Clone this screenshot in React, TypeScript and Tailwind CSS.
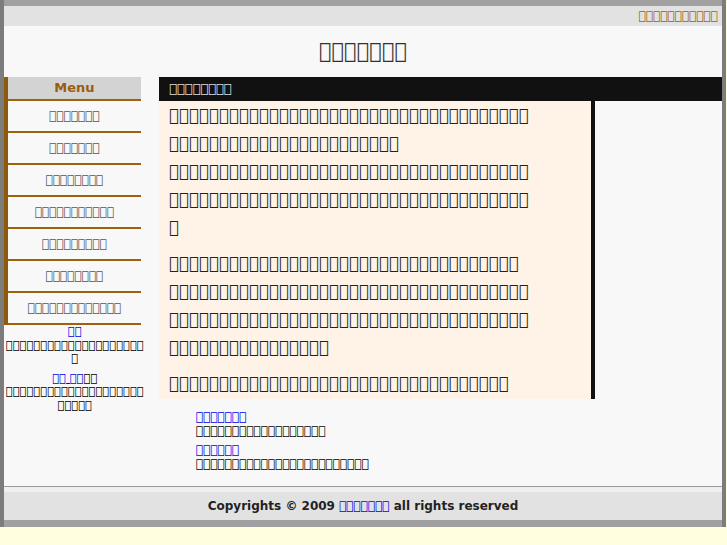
// Text in the reference shows as missing-glyph boxes; private-use
// characters give the same boxes here.
const box = (n: number) => "\uE000".repeat(n);

const menu = [7, 7, 8, 11, 9, 8, 13];

export default function App() {
  return (
    <div className="min-h-[545px] bg-[#ffffe0] font-['DejaVu_Sans',sans-serif]">
      <div className="w-[726px] border-l-[4px] border-r-[4px] border-[#7c7c7c] bg-[#f8f8f8]">
        <div className="h-[6px] bg-[#a0a0a0]" />
        <div className="flex h-[20px] items-center justify-end bg-[#e2e2e2] pr-[4px]">
          <a href="#" className="text-[12px] text-[#a0600c]">
            {box(11)}
          </a>
        </div>
        <div className="flex h-[51px] items-center justify-center text-[21px] text-[#333]">
          {box(7)}
        </div>

        <div className="flex items-start">
          <div className="w-[142px] shrink-0">
            <div className="w-[137px] border-l-[4px] border-[#8b5a0a]">
              <div className="flex h-[22px] items-center justify-center bg-[#d3d3d3] text-[13px] font-bold text-[#9a5c10]">
                Menu
              </div>
              <div className="h-[2px] bg-[#a0600c]" />
              {menu.map((n, i) => (
                <div
                  key={i}
                  className="flex h-[32px] items-center justify-center border-b-2 border-[#a0600c] text-[12px] text-[#555]"
                >
                  {box(n)}
                </div>
              ))}
            </div>
            <div className="text-center text-[11.5px] leading-[13.5px] text-black">
              <a href="#" className="text-[#0000ee] underline">
                {box(2)}
              </a>
              <div>
                {box(20)}
                <br />
                {box(1)}
              </div>
              <div className="mt-[6px]">
                <a href="#" className="text-[#0000ee] underline">
                  {box(2)} {box(2)}
                </a>
                {box(2)}
              </div>
              <div>
                {box(20)}
                <br />
                {box(5)}
              </div>
            </div>
          </div>

          <div className="ml-[13px] flex-1">
            <div className="flex h-[24px] items-center bg-[#111] pl-[10px] text-[13px] text-[#ddd]">
              {box(8)}
            </div>
            <div className="flex">
              <div className="w-[436px] border-r-[4px] border-[#111] bg-[#fef3e6] pl-[10px] pt-[1px] text-[16.67px] leading-[28px] text-[#222]">
                <p className="mb-[8px]">
                  {box(36)}
                  <br />
                  {box(23)}
                  <br />
                  {box(36)}
                  <br />
                  {box(36)}
                  <br />
                  {box(1)}
                </p>
                <p className="mb-[8px]">
                  {box(35)}
                  <br />
                  {box(36)}
                  <br />
                  {box(36)}
                  <br />
                  {box(16)}
                </p>
                <p className="pb-[1px]">{box(34)}</p>
              </div>
            </div>
            <ul className="ml-[37px] mt-[11px] text-[12px] leading-[14px]">
              <li className="mb-[5px]">
                <a href="#" className="text-[#0000ee] underline">
                  {box(7)}
                </a>
                <div className="text-black">{box(18)}</div>
              </li>
              <li>
                <a href="#" className="text-[#0000ee] underline">
                  {box(6)}
                </a>
                <div className="text-black">{box(24)}</div>
              </li>
            </ul>
          </div>
        </div>

        <div className="mt-[15px] h-[1px] bg-[#9a9a9a]" />
        <div className="h-[5px] bg-[#efefef]" />
        <div className="flex h-[28px] items-center justify-center bg-[#e2e2e2] text-[12px] font-bold text-[#222]">
          Copyrights © 2009&nbsp;
          <a href="#" className="font-normal text-[#0000ee] underline">
            {box(7)}
          </a>
          &nbsp;all rights reserved
        </div>
        <div className="h-[7px] bg-[#a0a0a0]" />
      </div>
    </div>
  );
}
